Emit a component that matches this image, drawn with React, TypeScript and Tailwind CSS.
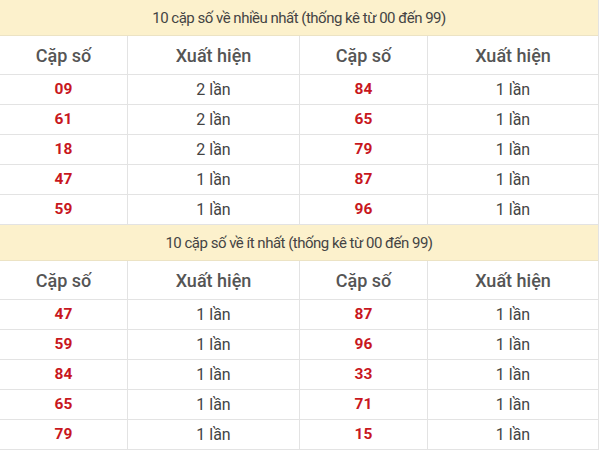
const top = [
  ["09", "2 lần", "84", "1 lần"],
  ["61", "2 lần", "65", "1 lần"],
  ["18", "2 lần", "79", "1 lần"],
  ["47", "1 lần", "87", "1 lần"],
  ["59", "1 lần", "96", "1 lần"],
];

const bottom = [
  ["47", "1 lần", "87", "1 lần"],
  ["59", "1 lần", "96", "1 lần"],
  ["84", "1 lần", "33", "1 lần"],
  ["65", "1 lần", "71", "1 lần"],
  ["79", "1 lần", "15", "1 lần"],
];

const cols = "grid grid-cols-[128px_172px_128px_1fr]";

const Section = ({ title, rows }: { title: string; rows: string[][] }) => (
  <div>
    <div className="h-[36px] pt-[2px] bg-[#fcf1cc] border-b border-[#ece3c4] flex items-center justify-center text-[15px] text-[#444] tracking-[-0.5px]">
      {title}
    </div>
    <div className={`${cols} h-[39px] border-b border-[#e3e3e3] items-center text-[18px] font-medium text-[#555]`}>
      <div className="text-center h-full flex items-center justify-center border-r border-[#e3e3e3]">Cặp số</div>
      <div className="text-center h-full flex items-center justify-center border-r border-[#e3e3e3]">Xuất hiện</div>
      <div className="text-center h-full flex items-center justify-center border-r border-[#e3e3e3]">Cặp số</div>
      <div className="text-center h-full flex items-center justify-center">Xuất hiện</div>
    </div>
    {rows.map((r, i) => (
      <div key={i} className={`${cols} h-[30px] border-b border-[#e3e3e3]`}>
        <div className="flex items-center justify-center border-r border-[#e3e3e3] text-[15.5px] font-bold text-[#c8171e]">{r[0]}</div>
        <div className="flex items-center justify-center border-r border-[#e3e3e3] text-[16px] text-[#444]">{r[1]}</div>
        <div className="flex items-center justify-center border-r border-[#e3e3e3] text-[15.5px] font-bold text-[#c8171e]">{r[2]}</div>
        <div className="flex items-center justify-center text-[16px] text-[#444]">{r[3]}</div>
      </div>
    ))}
  </div>
);

export default function App() {
  return (
    <div className="w-[600px] h-[450px] bg-white overflow-hidden font-['Roboto',sans-serif]">
      <div className="w-[599px] border-r border-[#e3e3e3]">
        <Section title="10 cặp số về nhiều nhất (thống kê từ 00 đến 99)" rows={top} />
        <Section title="10 cặp số về ít nhất (thống kê từ 00 đến 99)" rows={bottom} />
      </div>
    </div>
  );
}
